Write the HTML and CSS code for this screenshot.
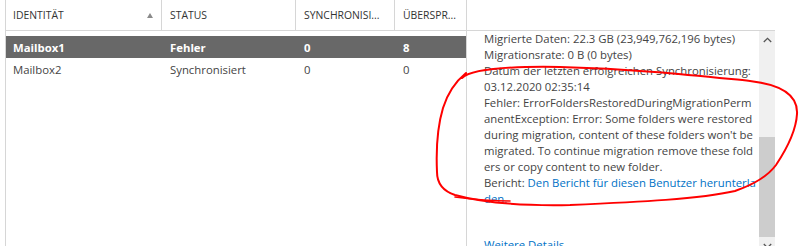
FILE: index.html
```html
<!DOCTYPE html>
<html lang="de">
<head>
<meta charset="utf-8">
<title>Migration</title>
<link rel="stylesheet" href="styles.css">
</head>
<body>
<div class="page">
  <div class="table">
    <div class="thead">
      <div class="th">Identität<span class="sort"></span></div>
      <div class="th">Status</div>
      <div class="th">Synchronisi...</div>
      <div class="th last">Überspr...</div>
    </div>
    <div class="tbody">
      <div class="row sel">
        <div class="td">Mailbox1</div>
        <div class="td">Fehler</div>
        <div class="td">0</div>
        <div class="td">8</div>
      </div>
      <div class="row">
        <div class="td">Mailbox2</div>
        <div class="td">Synchronisiert</div>
        <div class="td">0</div>
        <div class="td">0</div>
      </div>
    </div>
  </div>
  <div class="panel">
    <div class="details">
      <div class="line">Migrierte Daten: 22.3 GB (23,949,762,196 bytes)</div>
      <div class="line">Migrationsrate: 0 B (0 bytes)</div>
      <div class="line">Datum der letzten erfolgreichen Synchronisierung:</div>
      <div class="line">03.12.2020 02:35:14</div>
      <div class="line">Fehler: ErrorFoldersRestoredDuringMigrationPerm</div>
      <div class="line">anentException: Error: Some folders were restored</div>
      <div class="line">during migration, content of these folders won't be</div>
      <div class="line">migrated. To continue migration remove these fold</div>
      <div class="line">ers or copy content to new folder.</div>
      <div class="line">Bericht: <a class="link" href="#">Den Bericht für diesen Benutzer herunterla<br>den.</a></div>
      <a class="link more" href="#">Weitere Details</a>
    </div>
    <div class="scrollbar">
      <div class="sb-btn"><svg width="9" height="6" viewBox="0 0 9 6"><polyline points="0.8,5 4.5,1.3 8.2,5" fill="none" stroke="#555" stroke-width="1.3"/></svg></div>
      <div class="track"><div class="thumb"></div></div>
      <div class="sb-btn"><svg width="9" height="6" viewBox="0 0 9 6"><polyline points="0.8,1 4.5,4.7 8.2,1" fill="none" stroke="#555" stroke-width="1.3"/></svg></div>
    </div>
  </div>
  <svg class="ink" width="801" height="246" viewBox="0 0 801 246">
    <path d="M 462 78 C 470 70, 500 66, 560 67 C 640 69, 700 76, 750 81 C 785 85, 798 97, 797 114 C 796 132, 786 150, 776 165 C 768 176, 755 184, 735 191 C 700 199, 640 202, 570 205 C 520 206, 480 202, 455 195 C 443 191, 437 184, 437 172 C 436 150, 437 128, 443 108 C 448 92, 455 82, 466 73" fill="none" stroke="#f00" stroke-width="2" stroke-linecap="round"/>
    <path d="M 455 197 C 470 199, 490 201, 510 201" fill="none" stroke="#f00" stroke-width="1.6" stroke-linecap="round"/>
  </svg>
</div>
</body>
</html>
```
FILE: styles.css
```css
html, body {
  margin: 0;
  padding: 0;
  background: #fff;
}

.page {
  position: relative;
  width: 801px;
  height: 246px;
  overflow: hidden;
  display: flex;
  align-items: flex-start;
  font-family: "Open Sans", "Noto Sans", sans-serif;
  font-size: 11.35px;
  color: #444;
}

.table {
  margin-left: 5px;
  width: 460px;
  height: 246px;
  border-left: 1px solid #d6d6d6;
  border-right: 1px solid #d6d6d6;
  flex: none;
}

.thead {
  display: grid;
  grid-template-columns: 156px 134px 99px 71px;
  height: 30px;
  border-bottom: 1px solid #d6d6d6;
}

.th {
  display: flex;
  align-items: center;
  padding-left: 8px;
  border-right: 1px solid #d6d6d6;
  font-size: 10.4px;
  text-transform: uppercase;
  color: #333;
  white-space: nowrap;
  overflow: hidden;
}

.th:first-child {
  padding-left: 7px;
}

.th.last {
  border-right: none;
}

.sort {
  margin-left: auto;
  margin-right: 8px;
  width: 0;
  height: 0;
  border-left: 3.5px solid transparent;
  border-right: 3.5px solid transparent;
  border-bottom: 5px solid #8a8a8a;
}

.tbody {
  padding-top: 5px;
}

.row {
  display: grid;
  grid-template-columns: 156px 134px 99px 71px;
  height: 22px;
  align-items: center;
}

.td {
  padding-left: 8px;
  white-space: nowrap;
}

.td:first-child {
  padding-left: 7px;
}

.row.sel {
  background: #686868;
  color: #fff;
  font-weight: 700;
}

.panel {
  margin-top: 30px;
  width: 308px;
  border-top: 1px solid #d6d6d6;
  display: flex;
  flex: none;
}

.details {
  width: 275px;
  padding-left: 17px;
  line-height: 16px;
  white-space: nowrap;
  overflow: hidden;
}

.link {
  color: #0072c6;
  text-decoration: none;
}

.more {
  display: block;
  margin-top: 30px;
}

.scrollbar {
  width: 16px;
  background: #f0f0f0;
  display: flex;
  flex-direction: column;
}

.sb-btn {
  height: 17px;
  display: flex;
  align-items: center;
  justify-content: center;
}

.track {
  height: 189px;
  display: flex;
  flex-direction: column;
  justify-content: flex-end;
}

.thumb {
  height: 100px;
  background: #cdcdcd;
}

.ink {
  position: absolute;
  left: 0;
  top: 0;
  pointer-events: none;
}
```
